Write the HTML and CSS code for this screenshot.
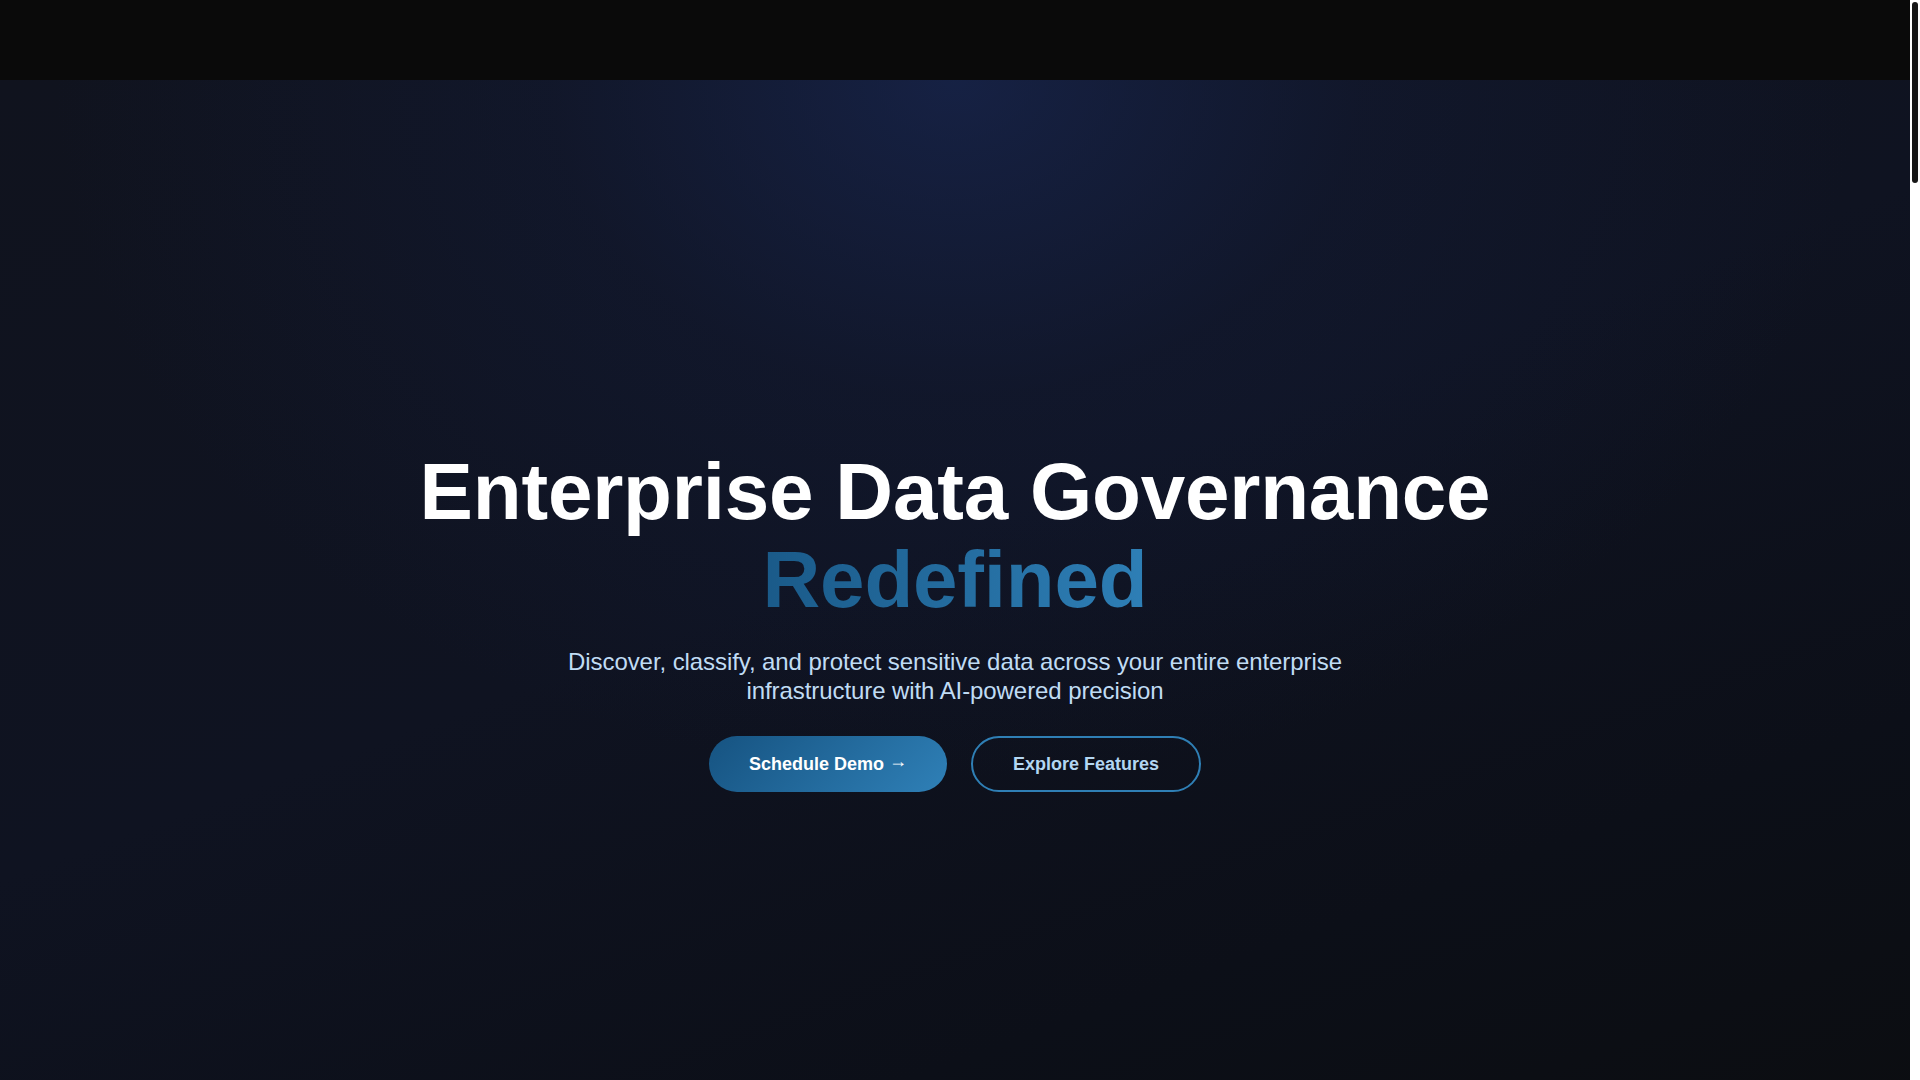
FILE: index.html
```html
<!DOCTYPE html>
<html lang="en">
<head>
<meta charset="utf-8">
<title>Enterprise Data Governance</title>
<link rel="stylesheet" href="styles.css">
</head>
<body>
<div class="page">
  <header class="topbar"></header>
  <main>
    <section class="hero">
      <div class="hero-content">
        <h1 class="hero-title">Enterprise Data Governance <span class="accent">Redefined</span></h1>
        <p class="hero-sub">Discover, classify, and protect sensitive data across your entire enterprise infrastructure with AI-powered precision</p>
        <div class="hero-actions">
          <a class="btn btn-primary" href="#">Schedule Demo <span class="arrow">→</span></a>
          <a class="btn btn-outline" href="#">Explore Features</a>
        </div>
      </div>
    </section>
    <section class="below"></section>
  </main>
</div>
<div class="scrollbar" aria-hidden="true"><div class="scrollbar-thumb"></div></div>
</body>
</html>
```

FILE: styles.css
```css
html, body {
  margin: 0;
  background: #ffffff;
}
body {
  font-family: "Liberation Sans", Arial, sans-serif;
  color: #ffffff;
}
.page {
  margin-right: 10px;
  background: #0b0d12;
}
.scrollbar {
  position: fixed;
  top: 0;
  right: 0;
  width: 10px;
  height: 100vh;
  background: #ffffff;
}
.scrollbar-thumb {
  margin: 2px 2px 0;
  width: 6px;
  height: 181px;
  border-radius: 3px;
  background: #161616;
}
.topbar {
  height: 80px;
  background: #0a0a0a;
}
.hero {
  min-height: 100vh;
  display: flex;
  align-items: center;
  justify-content: center;
  background:
    radial-gradient(ellipse 900px 700px at 50% 0%, rgba(24, 38, 80, 0.75) 0%, rgba(20, 30, 62, 0.35) 45%, rgba(15, 20, 40, 0) 100%),
    linear-gradient(160deg, #10131e 0%, #0f1321 45%, #0c0f18 75%, #0c0d10 100%);
}
.hero-content {
  display: flex;
  flex-direction: column;
  align-items: center;
  text-align: center;
}
.hero-title {
  margin: 0;
  font-size: 80px;
  line-height: 88px;
  font-weight: 700;
  letter-spacing: -0.2px;
  color: #ffffff;
}
.accent {
  display: block;
  background: linear-gradient(90deg, #1a5a89 0%, #2e7fb6 100%);
  -webkit-background-clip: text;
  background-clip: text;
  color: transparent;
  width: fit-content;
  margin: 0 auto;
}
.hero-sub {
  margin: 24px 0 0;
  max-width: 800px;
  font-size: 24px;
  line-height: 28.8px;
  letter-spacing: -0.08px;
  color: #c0dcf4;
}
.hero-actions {
  margin-top: 31px;
  display: flex;
  gap: 24px;
}
.btn {
  display: inline-block;
  padding: 16px 40px;
  font-size: 18px;
  line-height: 24px;
  font-weight: 700;
  border-radius: 9999px;
  text-decoration: none;
}
.arrow {
  line-height: 18px;
  vertical-align: 3px;
}
.btn-primary {
  color: #ffffff;
  background: linear-gradient(135deg, #165381 0%, #2f80b7 100%);
}
.btn-outline {
  padding: 14px 40px;
  color: #b3d6f2;
  border: 2px solid #2f7fb5;
}
.below {
  height: 5140px;
  background: #0c0d10;
}
```
